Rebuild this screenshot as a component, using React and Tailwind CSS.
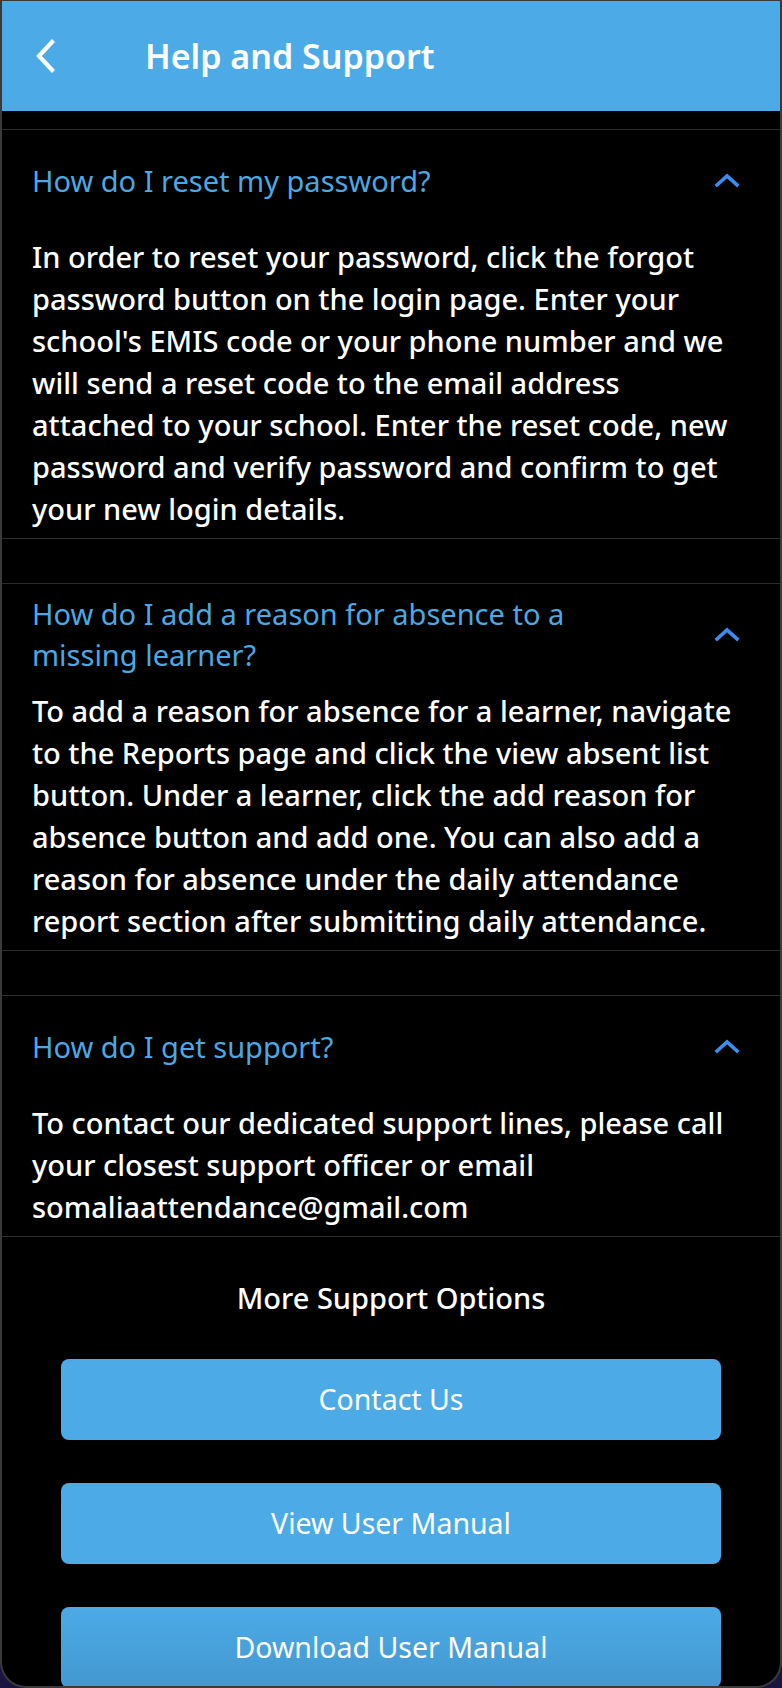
import React from "react";

const faqs = [
  {
    q: ["How do I reset my password?"],
    a: [
      "In order to reset your password, click the forgot",
      "password button on the login page. Enter your",
      "school's EMIS code or your phone number and we",
      "will send a reset code to the email address",
      "attached to your school. Enter the reset code, new",
      "password and verify password and confirm to get",
      "your new login details.",
    ],
  },
  {
    q: ["How do I add a reason for absence to a", "missing learner?"],
    a: [
      "To add a reason for absence for a learner, navigate",
      "to the Reports page and click the view absent list",
      "button. Under a learner, click the add reason for",
      "absence button and add one. You can also add a",
      "reason for absence under the daily attendance",
      "report section after submitting daily attendance.",
    ],
  },
  {
    q: ["How do I get support?"],
    a: [
      "To contact our dedicated support lines, please call",
      "your closest support officer or email",
      "somaliaattendance@gmail.com",
    ],
  },
];

function ChevronUp() {
  return (
    <svg width="26" height="16" viewBox="0 0 26 16" fill="none">
      <polyline points="3,13 13,4 23,13" stroke="#3b8ef0" strokeWidth="3.6" strokeLinecap="square" strokeLinejoin="miter" />
    </svg>
  );
}

function Back() {
  return (
    <svg width="24" height="36" viewBox="0 0 24 36" fill="none">
      <polyline points="18,4 5,18 18,32" stroke="#ffffff" strokeWidth="4.2" strokeLinecap="square" strokeLinejoin="miter" />
    </svg>
  );
}

export default function App() {
  return (
    <div className="h-[1688px] w-[782px] bg-[#1c1440] font-['Noto_Sans',sans-serif]">
      <div className="flex h-[1688px] flex-col overflow-hidden rounded-b-[26px] border-x-2 border-t border-b-2 border-[#3a3a3a] bg-black">
        <header className="flex h-[110px] shrink-0 items-center bg-[#4cabe7]">
          <div className="ml-[32px] flex w-[24px] items-center">
            <Back />
          </div>
          <h1 className="ml-[87px] text-[34px] font-semibold leading-none text-white">Help and Support</h1>
        </header>

        <main className="flex flex-col pt-[18px]">
          {faqs.map((f, i) => (
            <section key={i} className="mb-[44px] border-y border-[#2c2c2c] pt-[8px] pb-[8px]">
              <div className="flex min-h-[84px] items-center justify-between pl-[30px] pr-[40px]">
                <div className="text-[29px] font-normal leading-[41px] text-[#4aa9e3]">
                  {f.q.map((l, j) => (
                    <div key={j} className="whitespace-nowrap">{l}</div>
                  ))}
                </div>
                <ChevronUp />
              </div>
              <div className="mt-[14px] pl-[30px] text-[29px] font-medium leading-[42px] text-white">
                {f.a.map((l, j) => (
                  <div key={j} className="whitespace-nowrap">{l}</div>
                ))}
              </div>
            </section>
          ))}
        </main>

        <div className="-mt-[3px] flex flex-col items-center">
          <h2 className="text-[29px] font-medium leading-[40px] text-white">More Support Options</h2>
          <div className="mt-[41px] flex w-full flex-col gap-[43px] px-[59px]">
            <button className="h-[81px] w-full rounded-[8px] bg-[#4caae6] text-[28.5px] text-white">Contact Us</button>
            <button className="h-[81px] w-full rounded-[8px] bg-[#4caae6] text-[28.5px] text-white">View User Manual</button>
            <button className="h-[81px] w-full rounded-[8px] bg-gradient-to-b from-[#4caae6] to-[#4398d0] text-[28.5px] text-white">Download User Manual</button>
          </div>
        </div>
      </div>
    </div>
  );
}
